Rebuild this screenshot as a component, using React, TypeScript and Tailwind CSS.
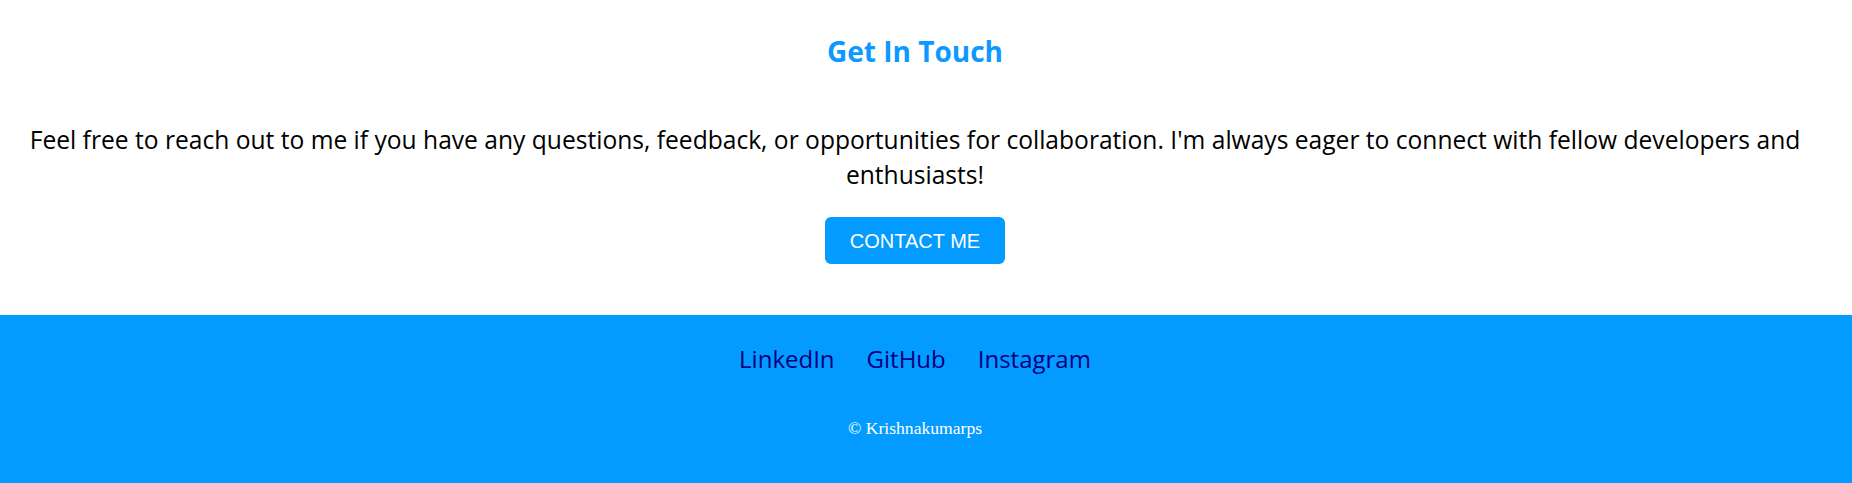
export default function App() {
  const links = ["LinkedIn", "GitHub", "Instagram"];

  return (
    <div className="w-full bg-white font-['Open_Sans',sans-serif]">
      {/* Contact */}
      <section className="flex flex-col items-center pl-4 pr-[38px] pt-[30px] pb-[51px] text-center">
        <h2 className="text-[28px] font-bold leading-[42px] text-[#0d99ff]">
          Get In Touch
        </h2>
        <p className="mt-[50px] text-[24.6px] leading-[35px] text-black">
          Feel free to reach out to me if you have any questions, feedback, or
          opportunities for collaboration. I'm always eager to connect with
          fellow developers and enthusiasts!
        </p>
        <button className="mt-[25px] h-[47px] w-[180px] rounded-md bg-[#039bff] font-['Liberation_Sans',Arial,sans-serif] text-[20px] text-white">
          CONTACT ME
        </button>
      </section>

      {/* Footer */}
      <footer className="flex h-[168px] flex-col items-center bg-[#039bff] pr-[22px] pt-[26px]">
        <nav className="flex gap-[32px]">
          {links.map((l) => (
            <a key={l} href="#" className="text-[24px] leading-[36px] text-[#000080]">
              {l}
            </a>
          ))}
        </nav>
        <p className="mt-[38px] font-['Liberation_Serif','Times_New_Roman',serif] text-[17.6px] text-white">
          © Krishnakumarps
        </p>
      </footer>
    </div>
  );
}
